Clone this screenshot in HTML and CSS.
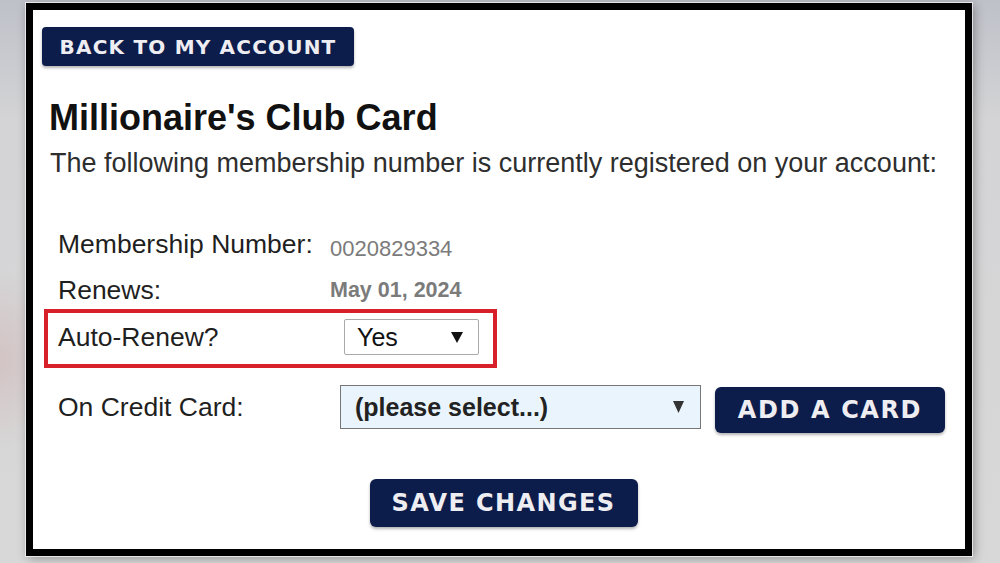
FILE: index.html
```html
<!DOCTYPE html>
<html lang="en">
<head>
    <meta charset="UTF-8">
    <meta name="viewport" content="width=device-width, initial-scale=1.0">
    <title>Millionaire's Club Card</title>
    <link rel="stylesheet" href="styles.css">
</head>
<body>
    <div class="frame">
        <a class="btn btn-back" href="#">BACK TO MY ACCOUNT</a>

        <h1>Millionaire's Club Card</h1>
        <p class="intro">The following membership number is currently registered on your account:</p>

        <!-- Membership details -->
        <div class="details">
            <div class="row">
                <span class="label">Membership Number:</span>
                <span class="value number">0020829334</span>
            </div>
            <div class="row">
                <span class="label">Renews:</span>
                <span class="value date">May 01, 2024</span>
            </div>
            <div class="row highlight">
                <span class="label">Auto-Renew?</span>
                <div class="select select-renew">
                    <span>Yes</span>
                    <svg class="arrow" width="12" height="11" viewBox="0 0 12 11"><path d="M0 0H12L6 11Z" fill="#111"/></svg>
                </div>
            </div>
            <div class="row row-card">
                <span class="label">On Credit Card:</span>
                <div class="select select-card">
                    <span>(please select...)</span>
                    <svg class="arrow" width="11" height="12" viewBox="0 0 11 12"><path d="M0 0H11L5.5 12Z" fill="#333"/></svg>
                </div>
                <a class="btn btn-add" href="#">ADD A CARD</a>
            </div>
        </div>

        <div class="actions">
            <a class="btn btn-save" href="#">SAVE CHANGES</a>
        </div>
    </div>
</body>
</html>
```

FILE: styles.css
```css
body {
    margin: 0;
    height: 563px;
    overflow: hidden;
    font-family: "Liberation Sans", Arial, sans-serif;
    background-color: #d3d3d3;
    background-image:
        radial-gradient(ellipse 60px 90px at 0 360px, rgba(205, 160, 160, 0.35), transparent),
        linear-gradient(to bottom, #bfc1c9 0, #d4d4d6 120px, #d8d8d8 100%);
}
.frame {
    box-sizing: border-box;
    width: 946px;
    height: 553px;
    margin: 3px 0 0 26px;
    padding: 17px 0 0 9px;
    background: #fff;
    border: 7px solid #000;
    box-shadow: 0 0 0 1px rgba(255, 255, 255, 0.7), 2px 2px 10px rgba(0, 0, 0, 0.35);
}
.btn {
    display: inline-flex;
    align-items: center;
    justify-content: center;
    box-sizing: border-box;
    background-color: #0c1c4b;
    color: #eeeef2;
    font-family: "DejaVu Sans", sans-serif;
    font-weight: bold;
    text-decoration: none;
    border-radius: 5px;
    box-shadow: 0 2px 3px rgba(0, 0, 0, 0.3);
}
.btn-back {
    width: 312px;
    height: 39px;
    font-size: 20px;
    letter-spacing: 1.2px;
    border-radius: 4px;
}
h1 {
    margin: 32px 0 0 7px;
    font-size: 36px;
    line-height: 40px;
    color: #111;
}
.intro {
    margin: 9px 0 0 8px;
    font-size: 27px;
    line-height: 32px;
    color: #2e2e2e;
}
.details {
    display: flex;
    flex-direction: column;
    align-items: flex-start;
    margin: 47px 0 0 16px;
}
.row {
    display: grid;
    grid-template-columns: 272px auto auto;
    align-items: center;
    margin-top: 10px;
}
.row:first-child {
    margin-top: 0;
}
.label {
    font-size: 26.5px;
    line-height: 36px;
    color: #1f1f1f;
}
.value {
    color: #7b7b7b;
    line-height: 36px;
}
.number {
    font-size: 22px;
    line-height: 26px;
    padding-top: 10px;
}
.date {
    font-size: 21.5px;
    font-weight: bold;
}
.highlight {
    margin: 1px 0 0 -14px;
    padding: 6px 14px 9px 10px;
    border: 4px solid #d8202b;
}
.select {
    display: flex;
    align-items: center;
    justify-content: space-between;
    box-sizing: border-box;
    color: #111;
}
.select-renew {
    width: 135px;
    height: 36px;
    margin-left: 14px;
    padding: 0 15px 0 12px;
    font-size: 25px;
    background: #fff;
    border: 1px solid #a9a9a9;
    border-radius: 2px;
}
.row-card {
    align-items: start;
    margin-top: 17px;
}
.row-card .label {
    margin-top: 4px;
}
.select-card {
    width: 361px;
    height: 44px;
    margin-left: 10px;
    padding: 0 16px 0 14px;
    font-size: 25px;
    font-weight: bold;
    color: #222;
    background: #e9f4fc;
    border: 1px solid #777;
}
.btn-add {
    width: 230px;
    height: 46px;
    margin: 2px 0 0 14px;
    font-size: 24px;
    letter-spacing: 1.6px;
    border-radius: 6px;
}
.actions {
    margin-top: 46px;
    text-align: center;
}
.btn-save {
    width: 268px;
    height: 48px;
    font-size: 24px;
    letter-spacing: 1.4px;
    border-radius: 6px;
}
```
